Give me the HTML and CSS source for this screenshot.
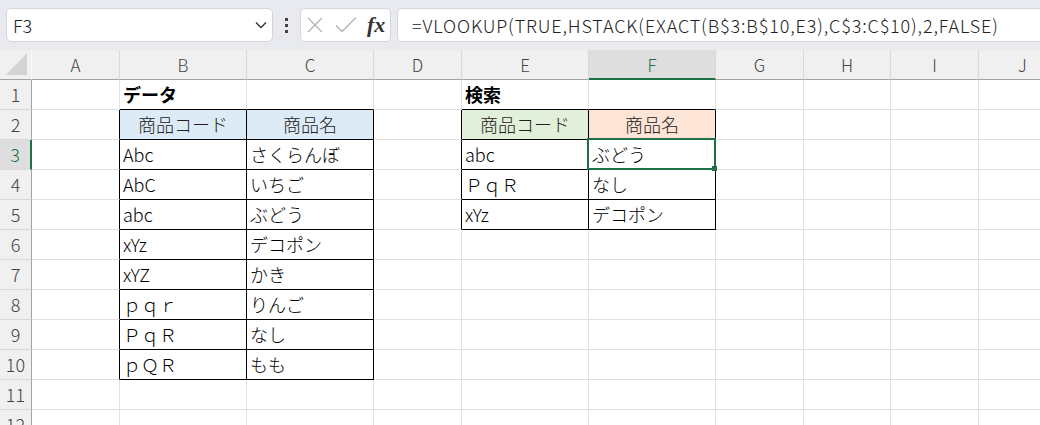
FILE: index.html
```html
<!DOCTYPE html>
<html lang="ja">
<head>
  <meta charset="UTF-8" />
  <title>VLOOKUP EXACT</title>
  <link rel="stylesheet" href="styles.css">
</head>
<body>

  <div class="bar">
    <div class="namebox">
      <span>F3</span>
      <svg class="chev" width="12" height="8" viewBox="0 0 12 8"><path d="M1 1.5 L6 6.5 L11 1.5" fill="none" stroke="#333" stroke-width="1.3"/></svg>
    </div>
    <div class="grip"><i></i><i></i><i></i></div>
    <div class="fxbox">
      <svg width="18" height="18" viewBox="0 0 18 18"><path d="M2 2 L16 16 M16 2 L2 16" stroke="#b3b3b3" stroke-width="1.3" fill="none"/></svg>
      <svg width="22" height="18" viewBox="0 0 22 18"><path d="M1 9.5 L7 15.5 L21 1.5" stroke="#b3b3b3" stroke-width="1.3" fill="none"/></svg>
      <span class="fx">fx</span>
    </div>
    <div class="formula">=VLOOKUP(TRUE,HSTACK(EXACT(B$3:B$10,E3),C$3:C$10),2,FALSE)</div>
  </div>

  <div class="sheet">
    <div class="c h corner"></div>
    <div class="c h">A</div><div class="c h">B</div><div class="c h">C</div><div class="c h">D</div><div class="c h">E</div>
    <div class="c h on">F</div><div class="c h">G</div><div class="c h">H</div><div class="c h">I</div><div class="c h">J</div>

    <div class="c r">1</div>
    <div class="c"></div><div class="c eb title">データ</div><div class="c eb"></div><div class="c"></div>
    <div class="c eb title">検索</div><div class="c eb"></div><div class="c"></div><div class="c"></div><div class="c"></div><div class="c"></div>

    <div class="c r">2</div>
    <div class="c er"></div><div class="c t mid blue">商品コード</div><div class="c t mid blue">商品名</div><div class="c er"></div>
    <div class="c t mid green">商品コード</div><div class="c t mid peach">商品名</div><div class="c"></div><div class="c"></div><div class="c"></div><div class="c"></div>

    <div class="c r on">3</div>
    <div class="c er"></div><div class="c t">Abc</div><div class="c t">さくらんぼ</div><div class="c er"></div>
    <div class="c t">abc</div><div class="c t cur">ぶどう</div><div class="c"></div><div class="c"></div><div class="c"></div><div class="c"></div>

    <div class="c r">4</div>
    <div class="c er"></div><div class="c t">AbC</div><div class="c t">いちご</div><div class="c er"></div>
    <div class="c t">ＰｑＲ</div><div class="c t">なし</div><div class="c"></div><div class="c"></div><div class="c"></div><div class="c"></div>

    <div class="c r">5</div>
    <div class="c er"></div><div class="c t">abc</div><div class="c t">ぶどう</div><div class="c er"></div>
    <div class="c t">xYz</div><div class="c t">デコポン</div><div class="c"></div><div class="c"></div><div class="c"></div><div class="c"></div>

    <div class="c r">6</div>
    <div class="c er"></div><div class="c t">xYz</div><div class="c t">デコポン</div><div class="c"></div>
    <div class="c"></div><div class="c"></div><div class="c"></div><div class="c"></div><div class="c"></div><div class="c"></div>

    <div class="c r">7</div>
    <div class="c er"></div><div class="c t">xYZ</div><div class="c t">かき</div><div class="c"></div>
    <div class="c"></div><div class="c"></div><div class="c"></div><div class="c"></div><div class="c"></div><div class="c"></div>

    <div class="c r">8</div>
    <div class="c er"></div><div class="c t">ｐｑｒ</div><div class="c t">りんご</div><div class="c"></div>
    <div class="c"></div><div class="c"></div><div class="c"></div><div class="c"></div><div class="c"></div><div class="c"></div>

    <div class="c r">9</div>
    <div class="c er"></div><div class="c t">ＰｑＲ</div><div class="c t">なし</div><div class="c"></div>
    <div class="c"></div><div class="c"></div><div class="c"></div><div class="c"></div><div class="c"></div><div class="c"></div>

    <div class="c r">10</div>
    <div class="c er"></div><div class="c t">ｐＱＲ</div><div class="c t">もも</div><div class="c"></div>
    <div class="c"></div><div class="c"></div><div class="c"></div><div class="c"></div><div class="c"></div><div class="c"></div>

    <div class="c r">11</div>
    <div class="c"></div><div class="c"></div><div class="c"></div><div class="c"></div>
    <div class="c"></div><div class="c"></div><div class="c"></div><div class="c"></div><div class="c"></div><div class="c"></div>

    <div class="c r">12</div>
    <div class="c"></div><div class="c"></div><div class="c"></div><div class="c"></div>
    <div class="c"></div><div class="c"></div><div class="c"></div><div class="c"></div><div class="c"></div><div class="c"></div>
  </div>

</body>
</html>
```

FILE: styles.css
```css
body {
  margin: 0;
  height: 425px;
  overflow: hidden;
  background: #fff;
  font-family: "Noto Sans CJK JP", "Noto Sans", sans-serif;
}
.bar {
  display: flex;
  align-items: center;
  height: 50px;
  padding-left: 6px;
  background: #e8eaf0;
  box-sizing: border-box;
}
.namebox, .fxbox, .formula {
  height: 34px;
  background: #fff;
  border: 1px solid #d4d6db;
  border-radius: 5px;
  box-sizing: border-box;
  display: flex;
  align-items: center;
}
.namebox {
  width: 267px;
  padding: 0 5px 0 6px;
  justify-content: space-between;
  font-size: 18px;
  font-weight: 300;
  color: #222;
}
.grip {
  width: 27px;
  display: flex;
  flex-direction: column;
  align-items: center;
  gap: 3px;
}
.grip i {
  width: 3px;
  height: 3px;
  background: #444;
}
.fxbox {
  width: 91px;
  padding-left: 5px;
  gap: 11px;
}
.fx {
  font-family: "Liberation Serif", serif;
  font-style: italic;
  font-weight: bold;
  font-size: 22px;
  color: #333;
  margin-left: -1px;
}
.formula {
  flex: 1;
  margin-left: 6px;
  margin-right: -12px;
  padding-left: 14px;
  font-size: 18px;
  font-weight: 300;
  letter-spacing: 0.85px;
  color: #222;
  white-space: nowrap;
}
.sheet {
  display: grid;
  grid-template-columns: 32px 88px 127px 127px 88px 127px 127px 88px 87px 88px 88px;
  grid-auto-rows: 30px;
}
.c {
  border-right: 1px solid #e1e1e1;
  border-bottom: 1px solid #e1e1e1;
  padding: 0 3px;
  font-size: 18px;
  font-weight: 300;
  line-height: 29px;
  color: #000;
  white-space: nowrap;
}
.h {
  background: #f0f0f0;
  border-right-color: #d8d8d8;
  border-bottom-color: #a3a3a3;
  text-align: center;
  font-size: 17px;
  color: #444;
}
.corner {
  position: relative;
  border-right-color: #f8f8f8;
}
.corner::after {
  content: "";
  position: absolute;
  right: 4px;
  bottom: 4px;
  width: 21px;
  height: 22px;
  background: #d4d4d4;
  clip-path: polygon(100% 0, 100% 100%, 0 100%);
}
.r {
  background: #f0f0f0;
  border-right-color: #a3a3a3;
  border-bottom-color: #d8d8d8;
  padding: 0;
  text-align: center;
  color: #444;
}
.h.on {
  background: #dedede;
  border-bottom: 2px solid #1e7145;
  color: #1e7145;
}
.r.on {
  background: #dedede;
  border-right: 2px solid #1e7145;
  color: #1e7145;
}
.title { font-weight: bold; }
.t { border-right-color: #000; border-bottom-color: #000; }
.er { border-right-color: #000; }
.eb { border-bottom-color: #000; }
.mid { text-align: center; color: #222; }
.blue { background: #ddebf7; }
.green { background: #e2efda; }
.peach { background: #fce4d6; }
.cur { position: relative; }
.cur::after {
  content: "";
  position: absolute;
  left: -2px;
  top: -2px;
  right: -1px;
  bottom: -1px;
  border: 2px solid #1e7145;
  z-index: 1;
}
.cur::before {
  content: "";
  position: absolute;
  right: -2px;
  bottom: -2px;
  width: 5px;
  height: 5px;
  background: #1e7145;
  z-index: 2;
}
```
